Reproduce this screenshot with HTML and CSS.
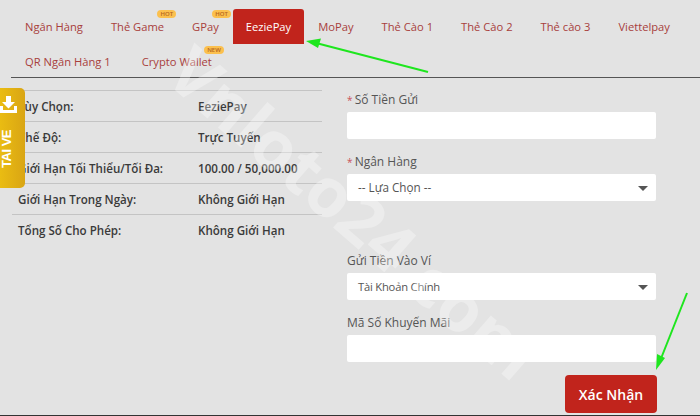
FILE: index.html
```html
<!DOCTYPE html>
<html lang="en">
<head>
    <meta charset="UTF-8">
    <title>Gửi Tiền</title>
    <link rel="stylesheet" href="styles.css">
</head>
<body>
    <div class="page">
        <!-- Tabs -->
        <nav class="tabs">
            <a class="tab">Ngân Hàng</a>
            <a class="tab">Thẻ Game<span class="badge">HOT</span></a>
            <a class="tab">GPay<span class="badge">HOT</span></a>
            <a class="tab active">EeziePay</a>
            <a class="tab">MoPay</a>
            <a class="tab">Thẻ Cào 1</a>
            <a class="tab">Thẻ Cào 2</a>
            <a class="tab">Thẻ cào 3</a>
            <a class="tab">Viettelpay</a>
            <a class="tab">QR Ngân Hàng 1</a>
            <a class="tab">Crypto Wallet<span class="badge badge-new">NEW</span></a>
        </nav>

        <div class="content">
            <!-- Info table -->
            <div class="info">
                <div class="info-row"><span class="info-label">Tùy Chọn:</span><span>EeziePay</span></div>
                <div class="info-row"><span class="info-label">Chế Độ:</span><span>Trực Tuyến</span></div>
                <div class="info-row"><span class="info-label">Giới Hạn Tối Thiểu/Tối Đa:</span><span>100.00 / 50,000.00</span></div>
                <div class="info-row"><span class="info-label">Giới Hạn Trong Ngày:</span><span>Không Giới Hạn</span></div>
                <div class="info-row"><span class="info-label">Tổng Số Cho Phép:</span><span>Không Giới Hạn</span></div>
            </div>

            <!-- Deposit form -->
            <form class="form">
                <label class="field-label"><span class="req">*</span> Số Tiền Gửi</label>
                <div class="control"></div>
                <label class="field-label second"><span class="req">*</span> Ngân Hàng</label>
                <div class="control select">-- Lựa Chọn --<i class="caret"></i></div>
                <label class="field-label wallet">Gửi Tiền Vào Ví</label>
                <div class="control select narrow">Tài Khoản Chính<i class="caret"></i></div>
                <label class="field-label second">Mã Số Khuyến Mãi</label>
                <div class="control"></div>
                <button class="submit" type="button">Xác Nhận</button>
            </form>
        </div>
    </div>

    <!-- Floating download tab -->
    <div class="download">
        <svg class="download-icon" width="17" height="17" viewBox="0 0 17 17">
            <path d="M6 0h5v6h4l-6.500 6.500L2 6h4z" fill="#fff"/>
            <path d="M0 10h3v4h11v-4h3v7H0z" fill="#fff"/>
        </svg>
        <span class="download-text">TAI VE</span>
    </div>

    <div class="watermark">Vnloto24.com</div>

    <!-- Annotation arrows -->
    <svg class="arrows" width="700" height="416" viewBox="0 0 700 416">
        <path d="M428 72L316 43" stroke="#1ee61e" stroke-width="2" fill="none"/>
        <path d="M306 41L321 38.500L318 48z" fill="#1ee61e"/>
        <path d="M687 293L660 361" stroke="#1ee61e" stroke-width="2" fill="none"/>
        <path d="M656 370L657 354L665 358z" fill="#1ee61e"/>
    </svg>
</body>
</html>
```
FILE: styles.css
```css
/* General Styling */
* {
    box-sizing: border-box;
}

body {
    margin: 0;
    width: 700px;
    height: 416px;
    overflow: hidden;
    position: relative;
    background-color: #e3e3e3;
    font-family: 'Open Sans', sans-serif;
    font-size: 12px;
    color: #444;
}

.page {
    height: 416px;
    padding-top: 9px;
    border-bottom: 1px solid #333;
}

/* Tabs */
.tabs {
    display: flex;
    flex-wrap: wrap;
    margin-left: 11px;
    height: 69px;
    align-content: flex-start;
    border-bottom: 1px solid #555;
}

.tab {
    position: relative;
    height: 34px;
    padding: 0 14px;
    line-height: 36px;
    font-size: 11.200px;
    color: #a8403c;
    white-space: nowrap;
}

.tab:last-child {
    margin-left: 3px;
}

.tab.active {
    padding: 0 13px;
    background-color: #c1241c;
    color: #fff;
    border-radius: 3px 3px 0 0;
    height: 35px;
}

.badge {
    position: absolute;
    top: 1px;
    right: 2px;
    padding: 0 3px;
    height: 8px;
    line-height: 8px;
    font-size: 6px;
    font-weight: 600;
    color: #b5651d;
    background-color: #fbc04e;
    border-radius: 4px;
}

.badge-new {
    top: 2px;
}

/* Content */
.content {
    display: flex;
    padding: 12px 0 0 12px;
}

.info {
    width: 310px;
    border-top: 1px solid #c4c4c4;
    margin-right: 25px;
    height: 155px;
}

.info-row {
    display: flex;
    height: 31px;
    line-height: 31px;
    padding-left: 6px;
    font-size: 11.600px;
    font-weight: 600;
    color: #3a3a3a;
    border-bottom: 1px solid #c4c4c4;
}

.info-row:last-child {
    border-bottom: none;
}

.info-label {
    width: 180px;
}

/* Form */
.form {
    width: 310px;
    display: flex;
    flex-direction: column;
}

.field-label {
    height: 22px;
    line-height: 19px;
    color: #555;
}

.field-label.second {
    margin-top: 13px;
}

.field-label.wallet {
    margin-top: 50px;
}

.req {
    margin-right: -1px;
    font-size: 10px;
    color: #c9525a;
}

.control {
    width: 309px;
    height: 27px;
    line-height: 27px;
    padding-left: 11px;
    background-color: #fff;
    border-radius: 2px;
    position: relative;
    font-size: 11.700px;
    color: #555;
}

.control.narrow {
    font-size: 11.200px;
    letter-spacing: -0.2px;
}

.caret {
    position: absolute;
    right: 8px;
    top: 12px;
    border-left: 5px solid transparent;
    border-right: 5px solid transparent;
    border-top: 5px solid #555;
}

.submit {
    align-self: flex-end;
    width: 92px;
    height: 38px;
    margin-top: 13px;
    border: none;
    border-radius: 4px;
    background-color: #c1241c;
    color: #fff;
    font-family: 'Open Sans', sans-serif;
    font-size: 14px;
    font-weight: 600;
}

/* Floating bits */
.download {
    position: absolute;
    top: 88px;
    left: 0;
    width: 25px;
    height: 100px;
    display: flex;
    flex-direction: column;
    align-items: flex-start;
    background: linear-gradient(90deg, #eabc12, #d9a514);
    border-radius: 0 5px 5px 0;
}

.download-icon {
    margin-top: 8px;
}

.download-text {
    margin-top: 17px;
    writing-mode: vertical-rl;
    transform: rotate(180deg);
    font-family: 'Liberation Sans', sans-serif;
    font-size: 13px;
    line-height: 14px;
    letter-spacing: -0.5px;
    font-weight: 700;
    color: #fff;
}

.watermark {
    position: absolute;
    top: 165px;
    left: 95px;
    width: 520px;
    text-align: center;
    transform: rotate(41deg);
    font-size: 68px;
    font-weight: 700;
    color: rgba(255, 255, 255, 0.32);
    pointer-events: none;
    white-space: nowrap;
}

.arrows {
    position: absolute;
    top: 0;
    left: 0;
    pointer-events: none;
}
```
